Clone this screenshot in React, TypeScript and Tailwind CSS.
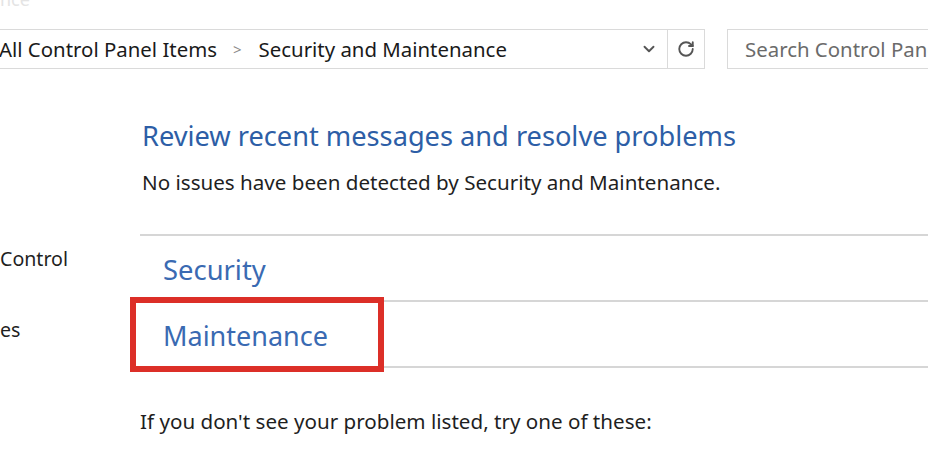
import { ChevronDown, RotateCw } from "lucide-react";

const App = () => {
  return (
    <div className="relative w-[928px] h-[450px] overflow-hidden bg-white font-['Noto_Sans',sans-serif] text-[#1f1f1f]">
      {/* title strip, mostly cut off */}
      <div className="h-[29px] overflow-hidden">
        <span className="block -mt-[14px] text-[18px] text-[#e4e4e4]">nce</span>
      </div>

      {/* address + search row */}
      <div className="flex h-[40px]">
        <div className="flex w-[705px] items-center border-y border-r border-[#dadada]">
          <div className="flex flex-1 items-center -ml-[1px] text-[20.4px] text-[#1a1a1a] whitespace-nowrap">
            <span>All Control Panel Items</span>
            <span className="ml-[16px] mr-[17px] text-[15px] text-[#8a8a8a]">&gt;</span>
            <span>Security and Maintenance</span>
          </div>
          <ChevronDown className="mr-[9px] h-[18px] w-[18px] text-[#555]" strokeWidth={2.5} />
          <div className="flex h-full w-[37px] items-center justify-center border-l border-[#dadada]">
            <RotateCw className="h-[18px] w-[18px] text-[#555]" strokeWidth={2.5} />
          </div>
        </div>
        <div className="ml-[22px] flex flex-1 items-center overflow-hidden border-y border-l border-[#dadada] pl-[17px] text-[20.4px] text-[#6b6b6b]">
          <span className="whitespace-nowrap">Search Control Panel</span>
        </div>
      </div>

      <div className="flex">
        {/* left nav, cut off */}
        <div className="w-[140px] shrink-0 pt-[178px] text-[19.6px] text-[#1f1f1f]">
          <div className="leading-[24px]">Control</div>
          <div className="mt-[47px] leading-[24px]">es</div>
        </div>

        {/* main */}
        <div className="flex-1">
          <h1 className="mt-[49px] ml-[2px] text-[27.2px] leading-[36px] text-[#2d5ea6] whitespace-nowrap">
            Review recent messages and resolve problems
          </h1>
          <p className="mt-[15px] ml-[2px] text-[20.6px] leading-[26px] whitespace-nowrap">
            No issues have been detected by Security and Maintenance.
          </p>

          <div className="mt-[39px] h-[2px] bg-[#d6d6d6]" />
          <div className="relative flex h-[64px] items-center pl-[23px] pt-[3px] text-[27.4px] text-[#3a6ab2]">
            Security
          </div>
          <div className="h-[2px] bg-[#d6d6d6]" />
          <div className="relative flex h-[64px] items-center pl-[23px] pt-[4px] text-[27px] text-[#3a6ab2]">
            Maintenance
            <div className="absolute -left-[10px] -top-[5px] h-[75px] w-[254px] border-[6px] border-[#dc2f28]" />
          </div>
          <div className="h-[2px] bg-[#d6d6d6]" />

          <p className="mt-[40px] text-[20.6px] leading-[26px] whitespace-nowrap">
            If you don't see your problem listed, try one of these:
          </p>
        </div>
      </div>
    </div>
  );
};

export default App;
